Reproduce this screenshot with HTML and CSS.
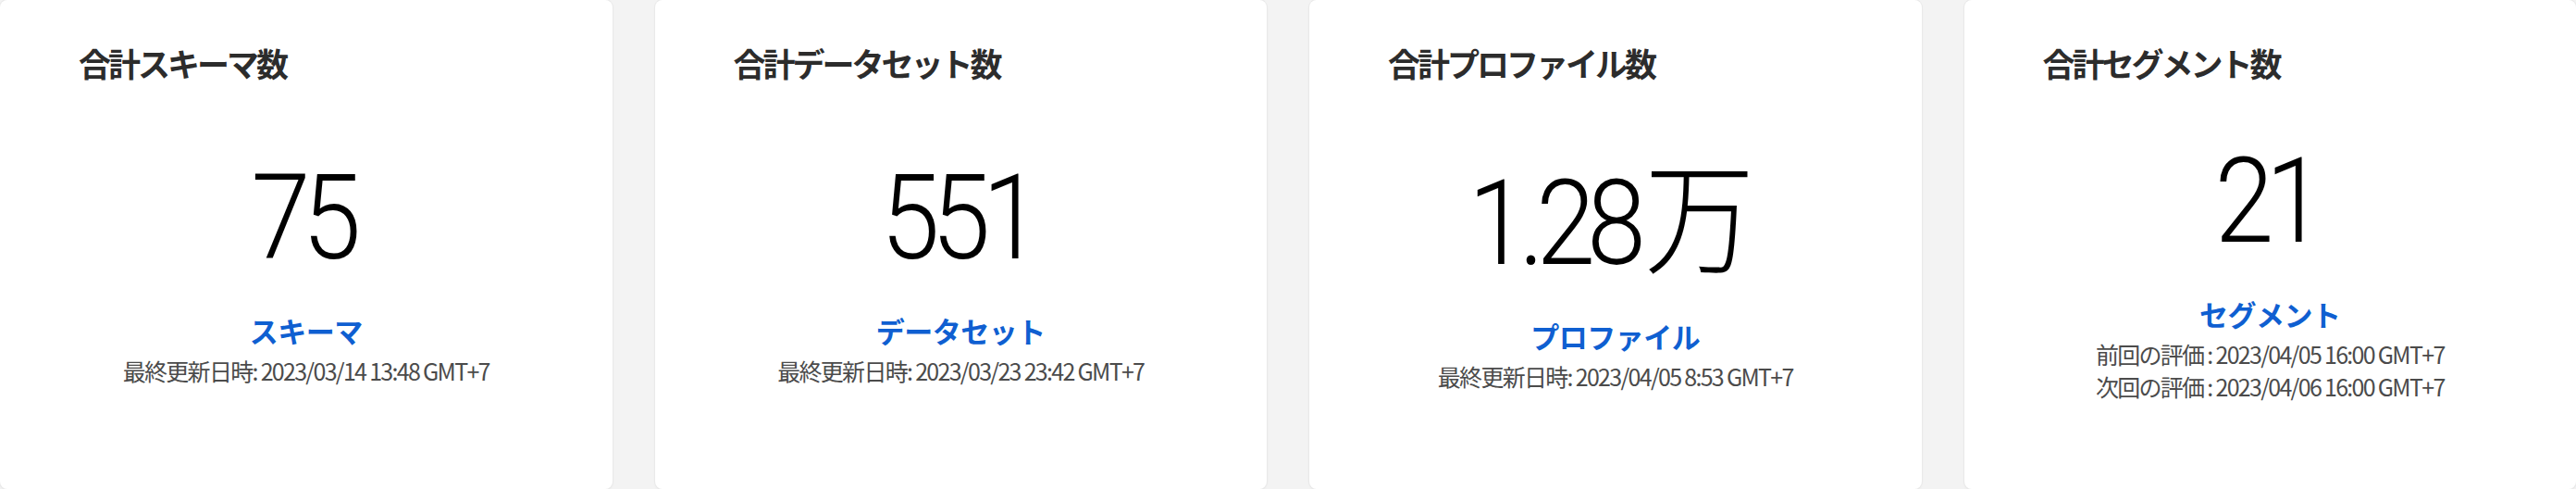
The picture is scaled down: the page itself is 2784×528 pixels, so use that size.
FILE: index.html
```html
<!DOCTYPE html>
<html lang="ja">
<head>
<meta charset="utf-8">
<title>概要</title>
<link rel="stylesheet" href="styles.css">
</head>
<body>
<main class="cards">
  <section class="card">
    <h2 class="card-title">合計スキーマ数</h2>
    <div class="card-body">
      <div class="big-number">75</div>
      <a class="card-link" href="#">スキーマ</a>
      <p class="meta">最終更新日時: 2023/03/14 13:48 GMT+7</p>
    </div>
  </section>
  <section class="card">
    <h2 class="card-title">合計データセット数</h2>
    <div class="card-body">
      <div class="big-number">551</div>
      <a class="card-link" href="#">データセット</a>
      <p class="meta">最終更新日時: 2023/03/23 23:42 GMT+7</p>
    </div>
  </section>
  <section class="card">
    <h2 class="card-title">合計プロファイル数</h2>
    <div class="card-body">
      <div class="big-number">1.28<span class="unit">万</span></div>
      <a class="card-link" href="#">プロファイル</a>
      <p class="meta">最終更新日時: 2023/04/05 8:53 GMT+7</p>
    </div>
  </section>
  <section class="card">
    <h2 class="card-title">合計セグメント数</h2>
    <div class="card-body">
      <div class="big-number">21</div>
      <a class="card-link" href="#">セグメント</a>
      <p class="meta">前回の評価 : 2023/04/05 16:00 GMT+7</p>
      <p class="meta">次回の評価 : 2023/04/06 16:00 GMT+7</p>
    </div>
  </section>
</main>
</body>
</html>
```
FILE: styles.css
```css
html, body {
  margin: 0;
  padding: 0;
  background: #f3f3f3;
}

body {
  width: 2784px;
  height: 528px;
  overflow: hidden;
  font-family: "Noto Sans CJK JP", "Noto Sans", sans-serif;
}

.cards {
  display: flex;
  gap: 46px;
  height: 528px;
}

.card {
  flex: 1 1 0;
  min-width: 0;
  display: flex;
  flex-direction: column;
  background: #ffffff;
  border-radius: 8px;
  box-shadow: 0 0 0 1px #e9e9e9, 0 1px 3px rgba(0, 0, 0, 0.06);
}

.card-title {
  margin: 0;
  padding: 46px 0 0 85px;
  font-size: 35px;
  line-height: 44px;
  font-weight: 700;
  letter-spacing: -3px;
  color: #2c2c2c;
}

.card-body {
  flex: 1;
  display: flex;
  flex-direction: column;
  align-items: center;
  justify-content: center;
  padding-bottom: 30px;
}

.big-number {
  font-family: Roboto, "Noto Sans CJK JP", sans-serif;
  font-weight: 300;
  font-size: 128px;
  line-height: 128px;
  letter-spacing: -10px;
  padding-right: 10px;
  color: #000000;
  transform: scaleX(0.9);
}

.big-number .unit {
  font-family: "Noto Sans CJK JP", sans-serif;
  font-weight: 300;
  font-size: 132px;
  letter-spacing: 0;
  margin-left: 8px;
}

.card-link {
  margin-top: 38px;
  font-size: 31px;
  line-height: 40px;
  font-weight: 700;
  letter-spacing: -0.5px;
  color: #0f5fd1;
  text-decoration: none;
}

.meta {
  margin: 0;
  font-size: 25px;
  line-height: 35px;
  letter-spacing: -1.7px;
  color: #4b4b4b;
}

.card-link + .meta {
  margin-top: 6px;
}
```
